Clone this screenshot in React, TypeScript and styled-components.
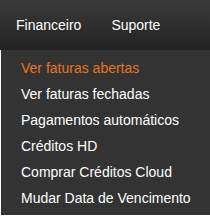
import React from "react";
import styled, { createGlobalStyle } from "styled-components";

const Global = createGlobalStyle`
  html, body { margin: 0; padding: 0; background: #fff; }
  body { font-family: "Liberation Sans", Arial, sans-serif; font-size: 14px; }
`;

const Navbar = styled.nav`
  height: 50px;
  background: linear-gradient(to bottom, #3b3b3b 0%, #222 100%);
  display: flex;
  padding-left: 1px;
`;

const NavLink = styled.a`
  display: block;
  padding: 15px;
  line-height: 20px;
  color: #fff;
  text-decoration: none;
`;

const Menu = styled.ul`
  list-style: none;
  margin: 0 0 0 1px;
  padding: 5px 0 4px;
  background: #333;
  width: 209px;
  box-sizing: border-box;
`;

const Item = styled.li<{ $active?: boolean }>`
  padding: 3px 20px;
  line-height: 20px;
  white-space: nowrap;
  color: ${(p) => (p.$active ? "#e8731f" : "#fff")};
`;

const items = [
  "Ver faturas abertas",
  "Ver faturas fechadas",
  "Pagamentos automáticos",
  "Créditos HD",
  "Comprar Créditos Cloud",
  "Mudar Data de Vencimento",
];

export default function App() {
  return (
    <>
      <Global />
      <Navbar>
        <NavLink>Financeiro</NavLink>
        <NavLink>Suporte</NavLink>
      </Navbar>
      <Menu>
        {items.map((t, i) => (
          <Item key={t} $active={i === 0}>
            {t}
          </Item>
        ))}
      </Menu>
    </>
  );
}
